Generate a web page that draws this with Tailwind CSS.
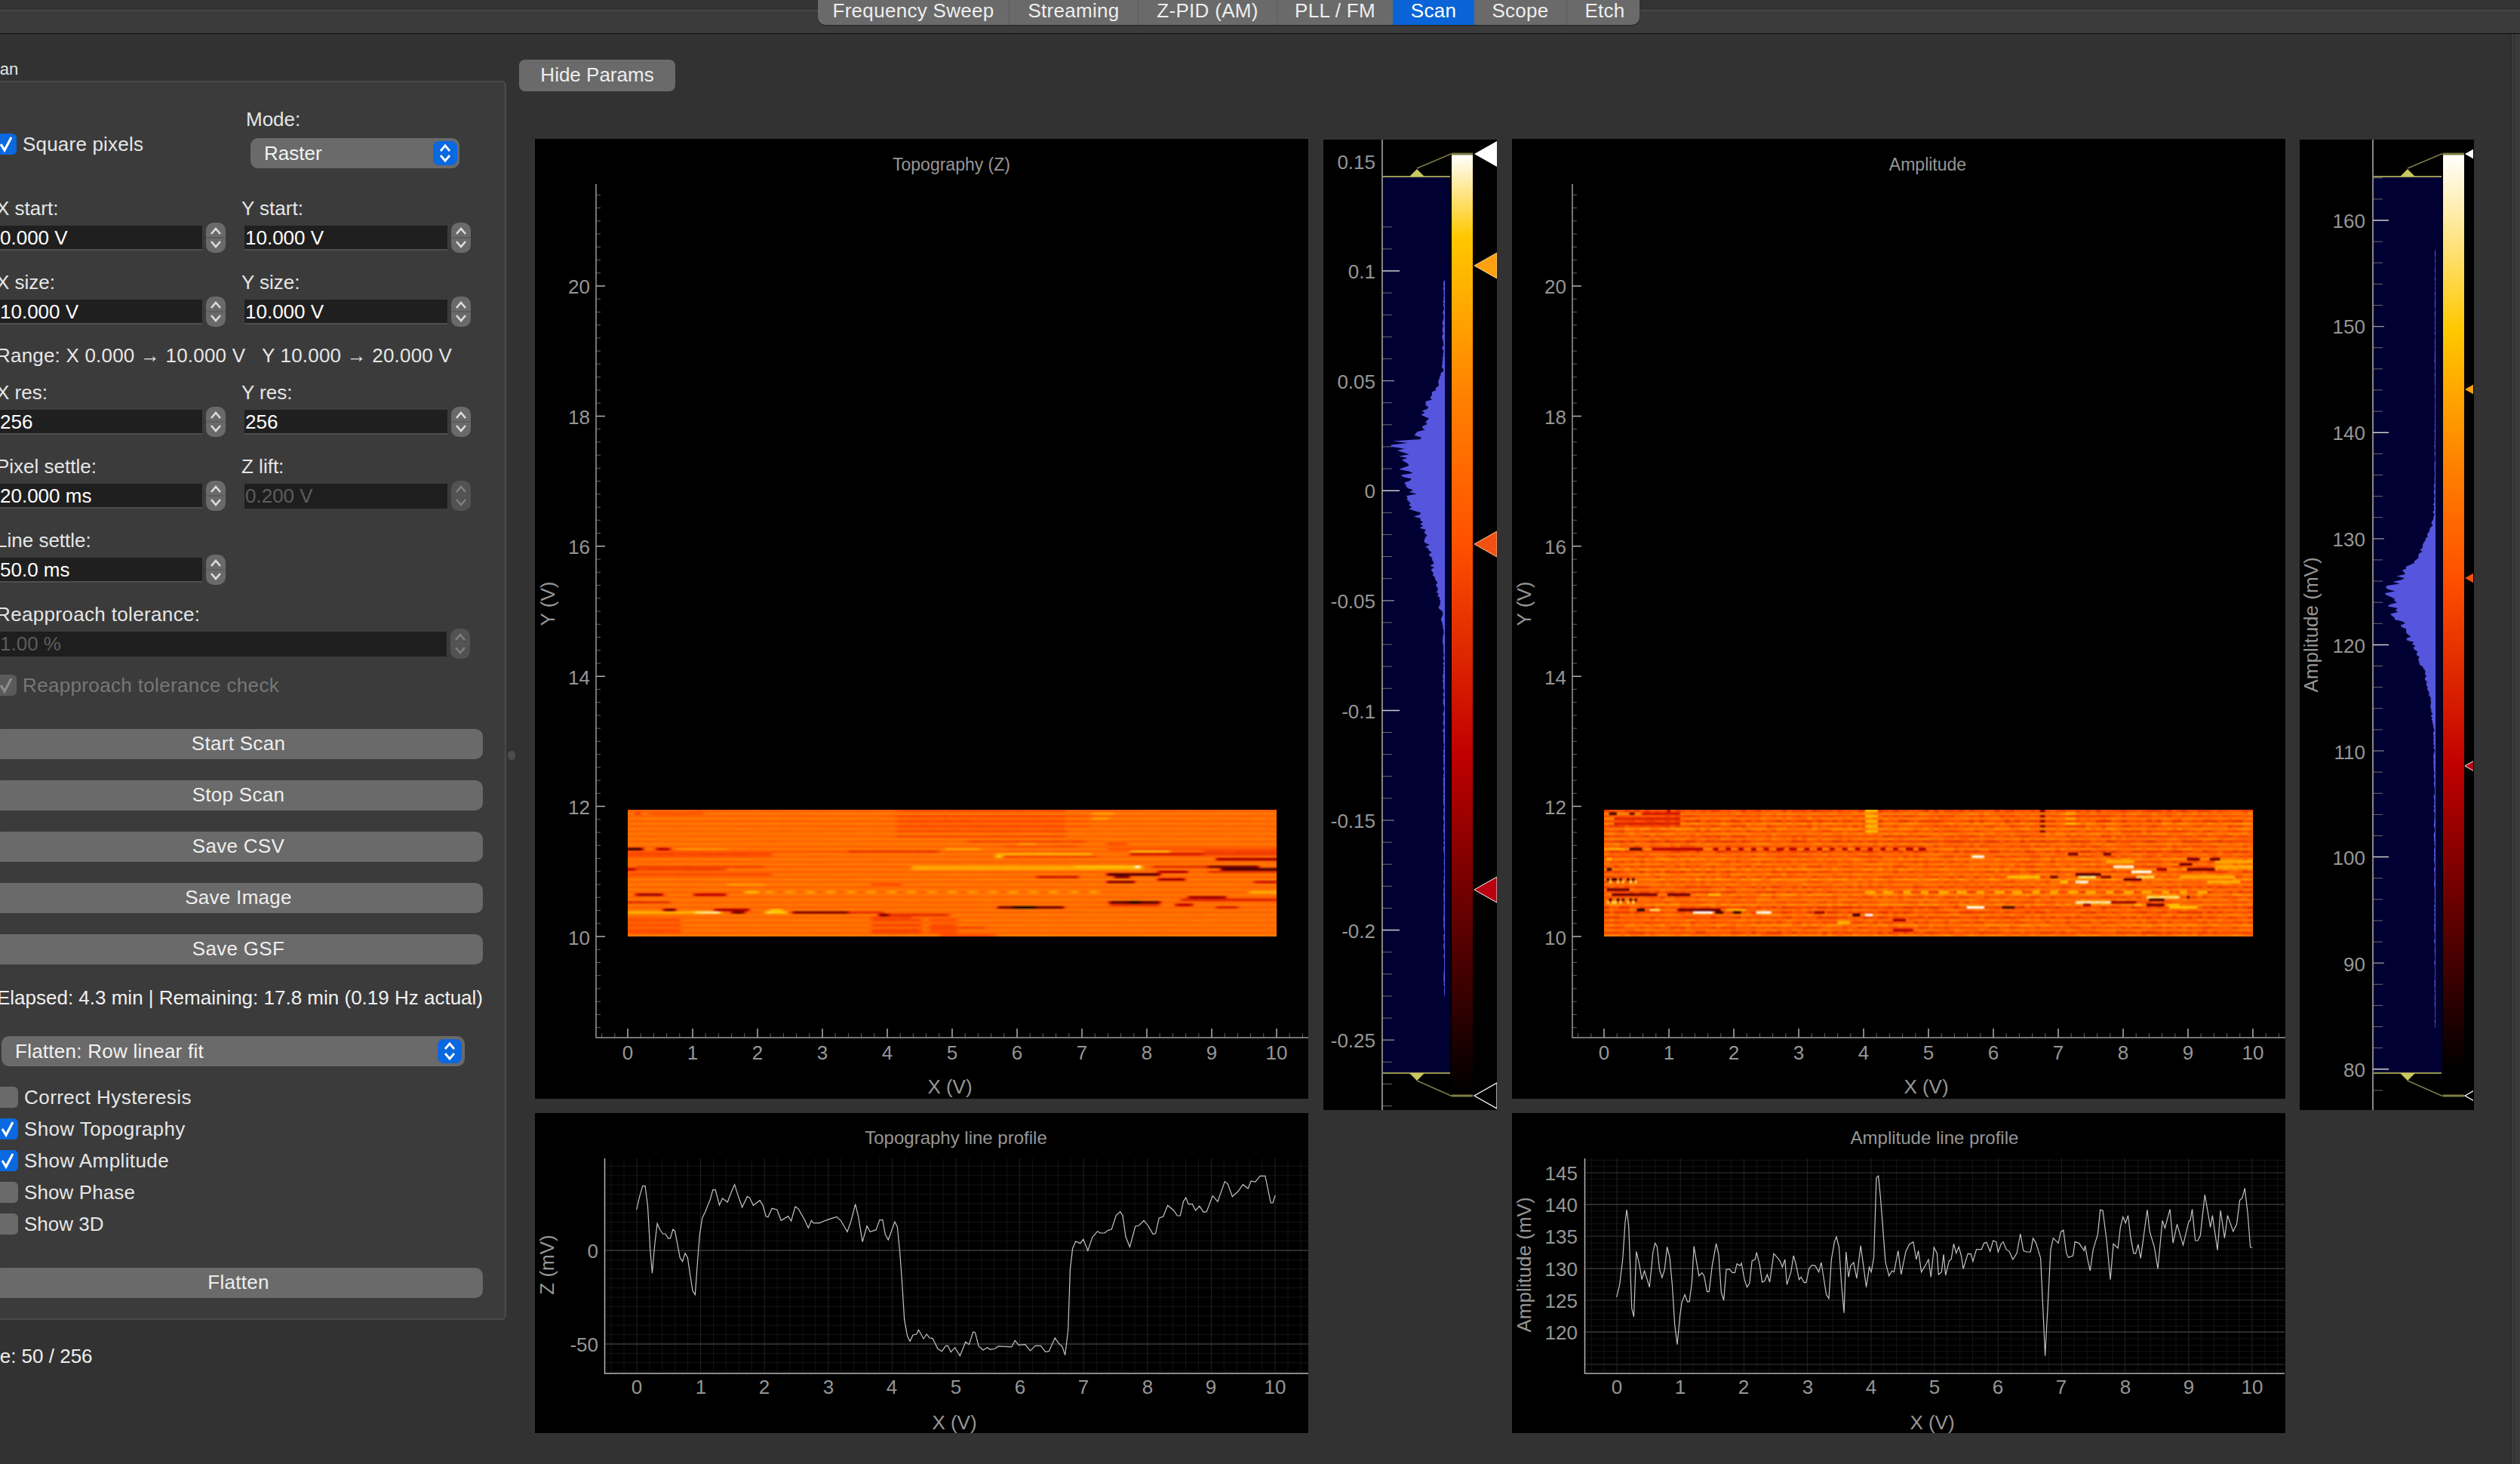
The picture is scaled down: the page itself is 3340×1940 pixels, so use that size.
<!DOCTYPE html>
<html>
<head>
<meta charset="utf-8">
<script src="https://cdn.jsdelivr.net/npm/@tailwindcss/browser@4"></script>
</head>
<body class="m-0 bg-[#323232]">
<svg class="hidden">
  <symbol id="spin" viewBox="0 0 26 40"><line x1="0" y1="20" x2="26" y2="20" stroke="#585858" stroke-width="1.5"/><polyline points="7,15 13,8 19,15" fill="none" stroke="currentColor" stroke-width="2.6"/><polyline points="7,25 13,32 19,25" fill="none" stroke="currentColor" stroke-width="2.6"/></symbol>
  <symbol id="updown" viewBox="0 0 32 32"><polyline points="10,13 16,6 22,13" fill="none" stroke="white" stroke-width="2.8"/><polyline points="10,19 16,26 22,19" fill="none" stroke="white" stroke-width="2.8"/></symbol>
  <symbol id="check" viewBox="0 0 28 28"><polyline points="7,14 12,22 21,5" fill="none" stroke="currentColor" stroke-width="3.2"/></symbol>
</svg>
<div class="relative w-[3340px] h-[1940px] overflow-hidden bg-[#323232] font-['Liberation_Sans',Arial,sans-serif] text-[26px] text-[#e6e6e6]">

  <header class="relative h-[45px]">
    <div class="h-[13px] bg-[#333333]"></div>
    <div class="h-[2px] bg-[#484848]"></div>
    <div class="h-[29px] bg-[#3b3b3b]"></div>
    <div class="h-[1px] bg-[#0e0e0e]"></div>
    <nav class="absolute top-0 left-[1084px] h-[33px] w-[1089px] flex rounded-b-[10px] overflow-hidden bg-[#6a6a6a] leading-[29px] text-center text-[#eeeeee] tracking-[0.3px] shadow-[0_1px_1px_#222]">
      <div class="w-[254px] border-r border-[#5a5a5a]">Frequency Sweep</div>
      <div class="w-[171px] border-r border-[#5a5a5a]">Streaming</div>
      <div class="w-[184px] border-r border-[#5a5a5a]">Z-PID (AM)</div>
      <div class="w-[153px]">PLL / FM</div>
      <div class="w-[108px] bg-[#0a64d8] text-white">Scan</div>
      <div class="w-[123px] border-r border-[#5a5a5a]">Scope</div>
      <div class="w-[96px] pl-[4px]">Etch</div>
    </nav>
  </header>

  <div class="flex h-[1895px]">
    <aside class="relative w-[688px] shrink-0 pt-[33px]">
      <div class="-ml-[30px] w-[701px]">
        <div class="h-[29px] leading-[28px] text-[22px] pl-[4px]">Scan</div>
        <section class="w-[701px] border-2 border-[#4a4a4a] rounded-[6px] bg-[#3b3b3b] pl-[23px] pt-[33px] pb-[27px]">
          <div class="grid grid-cols-[325px_325px] h-[118px]">
            <div class="pt-[35px] flex items-start gap-[8px] -ml-[1px]">
              <span class="w-[28px] h-[28px] rounded-[6px] bg-[#0a68e0] text-white block"><svg class="w-[28px] h-[28px]"><use href="#check"/></svg></span>
              <span class="leading-[28px] tracking-[0.2px]">Square pixels</span>
            </div>
            <div>
              <div class="h-[32px] leading-[32px] ml-[6px]">Mode:</div>
              <div class="mt-[9px] ml-[12px] w-[277px] h-[40px] rounded-[10px] bg-[#6a6a6a] flex items-center justify-between pl-[18px] pr-[3px] text-[#f2f2f2]">
                <span>Raster</span>
                <span class="w-[32px] h-[32px] rounded-[8px] bg-[#0a68e0] block"><svg class="w-[32px] h-[32px]"><use href="#updown"/></svg></span>
              </div>
            </div>
          </div>

          <div class="grid grid-cols-[325px_325px]">
            <div class="h-[98px]"><div class="h-[32px] leading-[32px]">X start:</div><div class="flex items-center mt-[3px] ml-[4px]"><div class="w-[269px] h-[33px] bg-[#1f1f1f] border-b-2 border-[#4e4e4e] pl-[1px] leading-[32px] text-white">0.000 V</div><svg class="ml-[5px] w-[26px] h-[40px] rounded-[10px] bg-[#6a6a6a] text-[#dddddd]"><use href="#spin"/></svg></div></div>
            <div class="h-[98px]"><div class="h-[32px] leading-[32px]">Y start:</div><div class="flex items-center mt-[3px] ml-[4px]"><div class="w-[269px] h-[33px] bg-[#1f1f1f] border-b-2 border-[#4e4e4e] pl-[1px] leading-[32px] text-white">10.000 V</div><svg class="ml-[5px] w-[26px] h-[40px] rounded-[10px] bg-[#6a6a6a] text-[#dddddd]"><use href="#spin"/></svg></div></div>
            <div class="h-[98px]"><div class="h-[32px] leading-[32px]">X size:</div><div class="flex items-center mt-[3px] ml-[4px]"><div class="w-[269px] h-[33px] bg-[#1f1f1f] border-b-2 border-[#4e4e4e] pl-[1px] leading-[32px] text-white">10.000 V</div><svg class="ml-[5px] w-[26px] h-[40px] rounded-[10px] bg-[#6a6a6a] text-[#dddddd]"><use href="#spin"/></svg></div></div>
            <div class="h-[98px]"><div class="h-[32px] leading-[32px]">Y size:</div><div class="flex items-center mt-[3px] ml-[4px]"><div class="w-[269px] h-[33px] bg-[#1f1f1f] border-b-2 border-[#4e4e4e] pl-[1px] leading-[32px] text-white">10.000 V</div><svg class="ml-[5px] w-[26px] h-[40px] rounded-[10px] bg-[#6a6a6a] text-[#dddddd]"><use href="#spin"/></svg></div></div>
          </div>

          <div class="h-[48px] leading-[30px] whitespace-pre tracking-[0.2px]">Range: X 0.000 → 10.000 V   Y 10.000 → 20.000 V</div>

          <div class="grid grid-cols-[325px_325px]">
            <div class="h-[98px]"><div class="h-[32px] leading-[32px]">X res:</div><div class="flex items-center mt-[3px] ml-[4px]"><div class="w-[269px] h-[33px] bg-[#1f1f1f] border-b-2 border-[#4e4e4e] pl-[1px] leading-[32px] text-white">256</div><svg class="ml-[5px] w-[26px] h-[40px] rounded-[10px] bg-[#6a6a6a] text-[#dddddd]"><use href="#spin"/></svg></div></div>
            <div class="h-[98px]"><div class="h-[32px] leading-[32px]">Y res:</div><div class="flex items-center mt-[3px] ml-[4px]"><div class="w-[269px] h-[33px] bg-[#1f1f1f] border-b-2 border-[#4e4e4e] pl-[1px] leading-[32px] text-white">256</div><svg class="ml-[5px] w-[26px] h-[40px] rounded-[10px] bg-[#6a6a6a] text-[#dddddd]"><use href="#spin"/></svg></div></div>
            <div class="h-[98px]"><div class="h-[32px] leading-[32px]">Pixel settle:</div><div class="flex items-center mt-[3px] ml-[4px]"><div class="w-[269px] h-[33px] bg-[#1f1f1f] border-b-2 border-[#4e4e4e] pl-[1px] leading-[32px] text-white">20.000 ms</div><svg class="ml-[5px] w-[26px] h-[40px] rounded-[10px] bg-[#6a6a6a] text-[#dddddd]"><use href="#spin"/></svg></div></div>
            <div class="h-[98px]"><div class="h-[32px] leading-[32px]">Z lift:</div><div class="flex items-center mt-[3px] ml-[4px]"><div class="w-[269px] h-[33px] bg-[#1e1e1e] pl-[1px] leading-[32px] text-[#5c5c5c]">0.200 V</div><svg class="ml-[5px] w-[26px] h-[40px] rounded-[10px] bg-[#525252] text-[#7e7e7e]"><use href="#spin"/></svg></div></div>
            <div class="h-[98px]"><div class="h-[32px] leading-[32px]">Line settle:</div><div class="flex items-center mt-[3px] ml-[4px]"><div class="w-[269px] h-[33px] bg-[#1f1f1f] border-b-2 border-[#4e4e4e] pl-[1px] leading-[32px] text-white">50.0 ms</div><svg class="ml-[5px] w-[26px] h-[40px] rounded-[10px] bg-[#6a6a6a] text-[#dddddd]"><use href="#spin"/></svg></div></div>
          </div>

          <div class="h-[98px]"><div class="h-[32px] leading-[32px] tracking-[0.35px]">Reapproach tolerance:</div><div class="flex items-center mt-[3px] ml-[4px]"><div class="w-[593px] h-[33px] bg-[#1e1e1e] pl-[1px] leading-[32px] text-[#5c5c5c]">1.00 %</div><svg class="ml-[5px] w-[26px] h-[40px] rounded-[10px] bg-[#525252] text-[#7e7e7e]"><use href="#spin"/></svg></div></div>

          <div class="-mt-[2px] h-[28px] flex items-center gap-[8px] -ml-[1px] text-[#777777]">
            <span class="w-[28px] h-[28px] rounded-[6px] bg-[#5a5a5a] text-[#8c8c8c] block"><svg class="w-[28px] h-[28px]"><use href="#check"/></svg></span>
            <span class="tracking-[0.35px]">Reapproach tolerance check</span>
          </div>

          <div class="mt-[44px] -ml-[3px] w-[648px] flex flex-col gap-[28px] text-center text-[#eeeeee] leading-[38px] tracking-[0.3px]">
            <div class="h-[40px] rounded-[10px] bg-[#6a6a6a]">Start Scan</div>
            <div class="h-[40px] rounded-[10px] bg-[#6a6a6a]">Stop Scan</div>
            <div class="h-[40px] rounded-[10px] bg-[#6a6a6a]">Save CSV</div>
            <div class="h-[40px] rounded-[10px] bg-[#6a6a6a]">Save Image</div>
            <div class="h-[40px] rounded-[10px] bg-[#6a6a6a]">Save GSF</div>
          </div>

          <div class="mt-[28px] -ml-[3px] w-[648px] h-[32px] leading-[32px] flex justify-end whitespace-nowrap text-[#f0f0f0]">Elapsed: 4.3 min | Remaining: 17.8 min (0.19 Hz actual)</div>

          <div class="mt-[35px] ml-[7px] w-[614px] h-[40px] rounded-[10px] bg-[#6a6a6a] flex items-center justify-between pl-[18px] pr-[4px] text-[#f2f2f2]">
            <span class="tracking-[0.25px]">Flatten: Row linear fit</span>
            <span class="w-[32px] h-[32px] rounded-[8px] bg-[#0a68e0] block"><svg class="w-[32px] h-[32px]"><use href="#updown"/></svg></span>
          </div>

          <div class="mt-[27px] ml-[1px] flex flex-col gap-[14px]">
            <div class="h-[28px] flex items-center gap-[8px]"><span class="w-[28px] h-[28px] rounded-[6px] bg-[#6a6a6a] block"></span><span class="tracking-[0.45px]">Correct Hysteresis</span></div>
            <div class="h-[28px] flex items-center gap-[8px]"><span class="w-[28px] h-[28px] rounded-[6px] bg-[#0a68e0] text-white block"><svg class="w-[28px] h-[28px]"><use href="#check"/></svg></span><span class="tracking-[0.4px]">Show Topography</span></div>
            <div class="h-[28px] flex items-center gap-[8px]"><span class="w-[28px] h-[28px] rounded-[6px] bg-[#0a68e0] text-white block"><svg class="w-[28px] h-[28px]"><use href="#check"/></svg></span><span class="tracking-[0.4px]">Show Amplitude</span></div>
            <div class="h-[28px] flex items-center gap-[8px]"><span class="w-[28px] h-[28px] rounded-[6px] bg-[#6a6a6a] block"></span><span class="tracking-[0.1px]">Show Phase</span></div>
            <div class="h-[28px] flex items-center gap-[8px]"><span class="w-[28px] h-[28px] rounded-[6px] bg-[#6a6a6a] block"></span><span>Show 3D</span></div>
          </div>

          <div class="mt-[44px] -ml-[3px] w-[648px] h-[40px] rounded-[10px] bg-[#6a6a6a] text-center text-[#eeeeee] leading-[38px] tracking-[0.3px]">Flatten</div>
        </section>
        <div class="mt-[32px] h-[32px] leading-[32px] -ml-[5px] text-[#f0f0f0]">Line: 50 / 256</div>
      </div>
      <div class="absolute top-[950px] right-[5px] w-[10px] h-[12px] rounded-full bg-[#4c4c4c]"></div>
    </aside>

    <main class="w-[2639px] shrink-0 pt-[34px]">
      <div class="w-[207px] h-[42px] rounded-[8px] bg-[#6a6a6a] text-center leading-[40px] text-[#eeeeee]">Hide Params</div>
      <div class="mt-[63px] ml-[21px] grid grid-cols-[1025px_230px_1025px_230px] gap-x-[20px] grid-rows-[1291px_424px] items-start">

        <div class="relative h-[1272px] bg-black">
          <svg viewBox="709 185 1025 1272" class="block w-[1025px] h-[1272px] fill-[#969696]">
            <path id="ia-min" stroke="#5e5e5e" stroke-width="1" fill="none"/><path id="ia-maj" stroke="#b0b0b0" stroke-width="1.5" fill="none"/>
            <path d="M790 245V1376H1734" stroke="#9a9a9a" stroke-width="1.5" fill="none"/>
            <text x="1261" y="227" text-anchor="middle" class="text-[23px]">Topography (Z)</text>
            <g text-anchor="end" class="text-[26px]"><text x="782" y="390">20</text><text x="782" y="563">18</text><text x="782" y="735">16</text><text x="782" y="908">14</text><text x="782" y="1080">12</text><text x="782" y="1253">10</text></g>
            <g text-anchor="middle" class="text-[26px]"><text x="832" y="1405">0</text><text x="918" y="1405">1</text><text x="1004" y="1405">2</text><text x="1090" y="1405">3</text><text x="1176" y="1405">4</text><text x="1262" y="1405">5</text><text x="1348" y="1405">6</text><text x="1434" y="1405">7</text><text x="1520" y="1405">8</text><text x="1606" y="1405">9</text><text x="1692" y="1405">10</text><text x="1259" y="1450">X (V)</text><text transform="translate(735 801) rotate(-90)">Y (V)</text></g>
          </svg>
          <canvas id="heat1" width="256" height="50" class="absolute left-[123px] top-[889px] w-[860px] h-[168px]"></canvas>
        </div>

        <div class="h-[1286px] bg-black mt-[1px]">
          <svg viewBox="1754 186 230 1286" class="block w-[230px] h-[1286px] fill-[#969696]">
            <defs><linearGradient id="g1" gradientUnits="userSpaceOnUse" x1="0" y1="206" x2="0" y2="1447"><stop offset="0" stop-color="#fff"/><stop offset=".087" stop-color="#ffc800"/><stop offset=".259" stop-color="#ff8000"/><stop offset=".416" stop-color="#ff5000"/><stop offset=".64" stop-color="#c00000"/><stop offset="1" stop-color="#000"/></linearGradient></defs>
            <rect x="1833" y="235" width="89" height="1188" fill="#000033"/>
            <path id="hist1" fill="#5555dd"/>
            <path id="c1-min" stroke="#6a6a6a" stroke-width="1" fill="none"/><path id="c1-maj" stroke="#9a9a9a" stroke-width="1.2" fill="none"/><path id="c1-lng" stroke="#d0d0d0" stroke-width="1.5" fill="none"/>
            <line x1="1832" y1="186" x2="1832" y2="1472" stroke="#b0b0b0" stroke-width="1.5"/>
            <rect x="1924" y="206" width="28" height="1241" fill="url(#g1)"/>
            <g fill="none" stroke="#c8c860" stroke-width="1.5"><path d="M1833 235H1922M1833 1423H1922"/></g>
            <g fill="none" stroke="#7e7e48" stroke-width="1.5"><path d="M1878 224L1923 205H1924M1878 1433L1923 1453H1924"/></g>
            <path d="M1924 205H1952M1924 1453H1952" stroke="#7e7e48" stroke-width="3" fill="none"/>
            <path d="M1868 235H1888L1878 225ZM1868 1423H1888L1878 1433Z" fill="#c8c860"/>
            <path d="M1954 205L1984 188V222Z" fill="#fff"/>
            <path d="M1954 353L1984 336V370Z" fill="#ffa010" stroke="#ffd890" stroke-width="1"/>
            <path d="M1954 722L1984 705V739Z" fill="#f25010" stroke="#ffc0a0" stroke-width="1"/>
            <path d="M1954 1180L1984 1163V1197Z" fill="#b80010" stroke="#fff" stroke-width="1"/>
            <path d="M1954 1453L1984 1436V1470Z" fill="#000" stroke="#fff" stroke-width="1.3"/>
            <g text-anchor="end" class="text-[26px]"><text x="1823" y="225">0.15</text><text x="1823" y="370">0.1</text><text x="1823" y="516">0.05</text><text x="1823" y="661">0</text><text x="1823" y="807">-0.05</text><text x="1823" y="953">-0.1</text><text x="1823" y="1098">-0.15</text><text x="1823" y="1244">-0.2</text><text x="1823" y="1389">-0.25</text></g>
          </svg>
        </div>

        <div class="relative h-[1272px] bg-black">
          <svg viewBox="2004 185 1025 1272" class="block w-[1025px] h-[1272px] fill-[#969696]">
            <path id="ib-min" stroke="#5e5e5e" stroke-width="1" fill="none"/><path id="ib-maj" stroke="#b0b0b0" stroke-width="1.5" fill="none"/>
            <path d="M2084 245V1376H3029" stroke="#9a9a9a" stroke-width="1.5" fill="none"/>
            <text x="2555" y="227" text-anchor="middle" class="text-[23px]">Amplitude</text>
            <g text-anchor="end" class="text-[26px]"><text x="2076" y="390">20</text><text x="2076" y="563">18</text><text x="2076" y="735">16</text><text x="2076" y="908">14</text><text x="2076" y="1080">12</text><text x="2076" y="1253">10</text></g>
            <g text-anchor="middle" class="text-[26px]"><text x="2126" y="1405">0</text><text x="2212" y="1405">1</text><text x="2298" y="1405">2</text><text x="2384" y="1405">3</text><text x="2470" y="1405">4</text><text x="2556" y="1405">5</text><text x="2642" y="1405">6</text><text x="2728" y="1405">7</text><text x="2814" y="1405">8</text><text x="2900" y="1405">9</text><text x="2986" y="1405">10</text><text x="2553" y="1450">X (V)</text><text transform="translate(2029 801) rotate(-90)">Y (V)</text></g>
          </svg>
          <canvas id="heat2" width="256" height="50" class="absolute left-[122px] top-[889px] w-[860px] h-[168px]"></canvas>
        </div>

        <div class="h-[1286px] bg-black mt-[1px] -ml-[1px]">
          <svg viewBox="3048 186 230 1286" class="block w-[230px] h-[1286px] fill-[#969696]">
            <defs><linearGradient id="g2" gradientUnits="userSpaceOnUse" x1="0" y1="206" x2="0" y2="1420"><stop offset="0" stop-color="#fff"/><stop offset=".191" stop-color="#ffc800"/><stop offset=".341" stop-color="#ff8000"/><stop offset=".462" stop-color="#ff5000"/><stop offset=".667" stop-color="#c00000"/><stop offset="1" stop-color="#000"/></linearGradient></defs>
            <rect x="3146" y="235" width="91" height="1188" fill="#000033"/>
            <path id="hist2" fill="#5555dd"/>
            <path id="c2-min" stroke="#6a6a6a" stroke-width="1" fill="none"/><path id="c2-maj" stroke="#9a9a9a" stroke-width="1.2" fill="none"/><path id="c2-lng" stroke="#d0d0d0" stroke-width="1.5" fill="none"/>
            <line x1="3145" y1="186" x2="3145" y2="1472" stroke="#b0b0b0" stroke-width="1.5"/>
            <rect x="3238" y="206" width="28" height="1241" fill="url(#g2)"/>
            <path d="M3146 235H3236M3146 1423H3236" fill="none" stroke="#c8c860" stroke-width="1.5"/>
            <path d="M3191 224L3236 205H3238M3191 1433L3236 1453H3238" fill="none" stroke="#7e7e48" stroke-width="1.5"/>
            <path d="M3238 205H3266M3238 1453H3266" stroke="#7e7e48" stroke-width="3" fill="none"/>
            <path d="M3181 235H3201L3191 225ZM3181 1423H3201L3191 1433Z" fill="#c8c860"/>
            <path d="M3267 205L3297 188V222Z" fill="#fff"/>
            <path d="M3267 517L3297 500V534Z" fill="#ffa010"/>
            <path d="M3267 767L3297 750V784Z" fill="#f25010"/>
            <path d="M3267 1016L3297 999V1033Z" fill="#b80010" stroke="#fff" stroke-width="1"/>
            <path d="M3267 1453L3297 1436V1470Z" fill="#000" stroke="#fff" stroke-width="1.3"/>
            <g text-anchor="end" class="text-[26px]"><text x="3135" y="303">160</text><text x="3135" y="443">150</text><text x="3135" y="584">140</text><text x="3135" y="725">130</text><text x="3135" y="866">120</text><text x="3135" y="1007">110</text><text x="3135" y="1147">100</text><text x="3135" y="1288">90</text><text x="3135" y="1428">80</text></g>
            <text transform="translate(3072 829) rotate(-90)" text-anchor="middle" class="text-[26px]">Amplitude (mV)</text>
          </svg>
        </div>

        <div class="h-[424px] bg-black">
          <svg viewBox="710 1476 1025 424" class="block w-[1025px] h-[424px] fill-[#969696]">
            <path id="l1-min" stroke="#141414" stroke-width="1" fill="none"/><path id="l1-maj" stroke="#222222" stroke-width="1" fill="none"/>
            <path d="M802 1658H1735M802 1782H1735" stroke="#4c4c4c" stroke-width="1.2" fill="none"/>
            <path d="M802.5 1536V1821H1735" stroke="#b4b4b4" stroke-width="1.5" fill="none"/>
            <g transform="translate(700 1470) scale(.6698 .3333)"><polyline vector-effect="non-scaling-stroke" fill="none" stroke="#c4c4c4" stroke-width="1.2" points="216,402 222,350 228,308 233,308 238,385 243,560 247,655 252,540 257,457 262,480 268,498 273,498 279,517 283,515 288,480 292,487 297,540 302,593 307,608 312,575 317,592 322,660 327,725 332,740 337,600 341,500 346,435 352,410 358,380 362,360 367,323 372,323 380,384 386,357 396,372 404,330 410,302 416,340 425,393 435,350 440,355 447,385 460,365 466,385 472,428 476,432 484,397 494,402 502,445 516,428 522,447 530,390 536,398 548,440 556,475 562,445 566,455 578,455 590,445 597,440 612,430 620,445 633,490 640,450 649,380 655,430 663,530 672,467 678,490 690,482 697,443 703,443 708,500 714,522 720,490 727,450 732,470 737,570 741,680 746,840 752,905 757,925 763,900 770,897 774,880 784,915 790,897 796,912 802,914 812,955 820,965 828,943 832,943 838,968 846,950 856,983 867,928 874,938 882,888 886,890 893,945 902,960 910,950 916,958 925,955 932,945 958,948 965,922 972,940 985,938 995,963 1005,943 1016,943 1025,967 1032,965 1044,912 1052,935 1058,945 1064,980 1070,880 1074,640 1079,555 1085,528 1094,536 1100,520 1109,565 1118,512 1128,488 1134,495 1142,495 1149,484 1156,480 1165,425 1173,410 1178,425 1184,510 1192,550 1203,468 1210,465 1220,445 1228,465 1238,500 1243,497 1250,435 1258,430 1267,385 1279,405 1286,426 1292,426 1298,370 1303,354 1308,380 1316,380 1322,405 1330,388 1338,412 1344,410 1356,347 1366,370 1380,290 1386,300 1395,350 1406,330 1416,302 1426,318 1432,288 1440,292 1450,268 1460,268 1471,375 1475,375 1480,345"/></g>
            <text x="1268" y="1517" text-anchor="middle" class="text-[24px]">Topography line profile</text>
            <g text-anchor="end" class="text-[26px]"><text x="794" y="1668">0</text><text x="794" y="1792">-50</text></g>
            <g text-anchor="middle" class="text-[26px]"><text x="845" y="1848">0</text><text x="930" y="1848">1</text><text x="1014" y="1848">2</text><text x="1099" y="1848">3</text><text x="1183" y="1848">4</text><text x="1268" y="1848">5</text><text x="1353" y="1848">6</text><text x="1437" y="1848">7</text><text x="1522" y="1848">8</text><text x="1606" y="1848">9</text><text x="1691" y="1848">10</text><text x="1266" y="1895">X (V)</text><text transform="translate(735 1677) rotate(-90)">Z (mV)</text></g>
          </svg>
        </div>
        <div></div>
        <div class="h-[424px] bg-black">
          <svg viewBox="2004 1476 1025 424" class="block w-[1025px] h-[424px] fill-[#969696]">
            <path id="l2-min" stroke="#141414" stroke-width="1" fill="none"/><path id="l2-maj" stroke="#222222" stroke-width="1" fill="none"/>
            <path d="M2100 1597H3028M2100 1682H3028M2100 1766H3028" stroke="#4c4c4c" stroke-width="1.2" fill="none"/>
            <path d="M2100 1555H3028M2100 1639H3028M2100 1724H3028M2100 1809H3028" stroke="#2e2e2e" stroke-width="1" fill="none"/>
            <path d="M2100.5 1536V1821H3028" stroke="#b4b4b4" stroke-width="1.5" fill="none"/>
            <g transform="translate(2000 1470) scale(.6698 .3333)"><polyline vector-effect="non-scaling-stroke" fill="none" stroke="#c4c4c4" stroke-width="1.2" points="213,750 219,700 225,600 230,450 233,402 237,470 243,795 247,828 252,568 258,620 263,680 268,645 272,670 278,710 285,570 289,535 293,548 298,640 303,672 308,640 313,550 318,590 323,700 328,860 333,938 338,830 342,770 348,740 353,768 357,768 362,690 366,548 372,620 376,665 382,653 386,665 392,728 396,728 402,625 410,537 415,580 420,730 425,762 430,640 436,638 442,652 447,652 451,617 457,625 460,615 466,680 471,710 476,695 481,605 487,600 490,572 496,620 501,690 506,685 511,660 516,690 524,577 530,590 536,605 541,630 546,600 550,700 558,650 563,585 568,620 574,680 578,670 584,692 588,692 594,635 600,622 606,625 613,650 618,612 624,690 628,740 633,755 638,600 644,530 648,510 653,550 658,700 663,812 667,570 672,670 676,625 682,612 688,675 696,545 707,710 713,630 717,650 722,590 727,275 731,268 735,350 745,610 752,665 758,645 762,650 770,565 776,660 785,570 792,540 800,530 806,600 810,565 816,650 825,620 830,600 835,670 841,552 847,575 850,660 856,650 860,580 864,663 871,605 875,600 880,538 885,575 890,550 895,585 899,637 908,577 914,578 918,608 925,560 935,560 940,535 945,532 952,568 958,525 964,530 968,570 974,537 978,530 984,560 990,568 997,600 1005,575 1012,498 1018,565 1024,570 1032,570 1037,516 1043,535 1052,595 1061,983 1072,560 1077,515 1087,535 1092,490 1097,483 1103,575 1107,592 1116,585 1120,530 1128,535 1138,565 1140,545 1145,600 1150,645 1156,560 1165,500 1170,403 1175,405 1183,530 1190,680 1196,538 1205,555 1210,470 1215,430 1220,455 1225,425 1230,510 1236,575 1240,577 1245,540 1250,595 1263,402 1268,490 1277,550 1284,637 1293,445 1298,475 1308,400 1314,535 1322,460 1334,543 1345,450 1348,445 1352,400 1358,525 1363,525 1368,505 1377,342 1388,472 1392,425 1402,563 1408,405 1416,515 1422,425 1433,488 1440,460 1446,365 1451,355 1456,317 1462,420 1467,552 1471,552"/></g>
            <text x="2564" y="1517" text-anchor="middle" class="text-[24px]">Amplitude line profile</text>
            <g text-anchor="end" class="text-[26px]"><text x="2091" y="1565">145</text><text x="2091" y="1607">140</text><text x="2091" y="1649">135</text><text x="2091" y="1692">130</text><text x="2091" y="1734">125</text><text x="2091" y="1776">120</text></g>
            <g text-anchor="middle" class="text-[26px]"><text x="2143" y="1848">0</text><text x="2227" y="1848">1</text><text x="2311" y="1848">2</text><text x="2396" y="1848">3</text><text x="2480" y="1848">4</text><text x="2564" y="1848">5</text><text x="2648" y="1848">6</text><text x="2732" y="1848">7</text><text x="2817" y="1848">8</text><text x="2901" y="1848">9</text><text x="2985" y="1848">10</text><text x="2561" y="1895">X (V)</text><text transform="translate(2029 1677) rotate(-90)">Amplitude (mV)</text></g>
          </svg>
        </div>
        <div></div>
      </div>
    </main>

    <div class="w-[13px] shrink-0 bg-[#3b3b3b] border-l-2 border-[#2c2c2c]"><div class="w-[4px] h-full border-r border-[#2c2c2c]"></div></div>
  </div>
</div>

<script>
(function(){
  var seed=12345;
  function R(){seed=(seed*1664525+1013904223)>>>0;return seed/4294967296;}
  var stops=[[0,[0,0,0]],[.36,[192,0,0]],[.584,[255,80,0]],[.74,[255,128,0]],[.913,[255,200,0]],[1,[255,255,255]]];
  function cmap(t){t=Math.max(0,Math.min(1,t));for(var i=1;i<stops.length;i++){if(t<=stops[i][0]){var a=stops[i-1],b=stops[i],f=(t-a[0])/(b[0]-a[0]);return [0,1,2].map(function(k){return a[1][k]+(b[1][k]-a[1][k])*f;});}}return [255,255,255];}
  function heat(id,x0,x1,e,o,noise,seg,feats,blur){
    var c=document.getElementById(id),g=c.getContext('2d'),im=g.createImageData(256,50),v=[];
    for(var r=0;r<50;r++){v[r]=[];var ro=(R()-.5)*noise*.6,last=0;for(var i=0;i<256;i++){if(i%seg==0)last=(R()-.5)*noise;v[r][i]=(r%2?o:e)+ro+last;}}
    feats.forEach(function(f){var a=Math.max(0,Math.round((f[0]-x0)/(x1-x0)*256)),b=Math.min(256,Math.round((f[1]-x0)/(x1-x0)*256)),r=Math.min(49,Math.max(0,Math.floor((f[2]-102)/10.06)));for(var i=a;i<Math.max(b,a+1);i++){v[r][i]=f[3]+(R()-.5)*.03;}});
    if(blur){for(var r=0;r<50;r++){var s=v[r].slice();for(var i=1;i<255;i++){v[r][i]=(s[i-1]+s[i]*2+s[i+1])/4;}}}
    for(var r=0;r<50;r++)for(var i=0;i<256;i++){var p=cmap(v[r][i]),k=(r*256+i)*4;im.data[k]=p[0];im.data[k+1]=p[1];im.data[k+2]=p[2];im.data[k+3]=255;}
    g.putImageData(im,0,0);
  }
  var f1=[];
  [112,127,147,167,187,207].forEach(function(y){f1.push([665,1035,y,.57]);});
  [137,157,177].forEach(function(y){f1.push([665,1035,y,.66]);});
  [127,147,167].forEach(function(y){f1.push([1040,1085,y,.6]);});
  f1.push([1090,1140,117,.82],[1090,1130,137,.82],[100,110,117,.5],[130,250,117,.6],[820,1080,227,.56],[900,1060,247,.58],[930,970,237,.8],[1125,1165,237,.58]);
  f1.push([85,120,258,.12],[145,180,258,.35],[190,300,258,.78],[770,850,258,.82],[1120,1490,258,.6]);
  f1.push([85,560,268,.6],[560,760,268,.52],[1170,1260,268,.85],[1330,1490,268,.54]);
  f1.push([85,400,278,.56],[880,1090,278,.86],[1170,1330,278,.42],[1330,1490,278,.53]);
  f1.push([85,400,288,.6],[880,900,288,.9],[900,1100,288,.56],[1360,1490,298,.3]);
  f1.push([100,380,328,.55],[700,1050,328,.83],[1050,1180,328,.9],[1180,1200,328,1],[1220,1340,328,.5],[1340,1450,328,.22],[85,110,338,.35],[100,300,338,.55],[700,1200,338,.82],[1370,1490,338,.13],[1230,1300,348,.35],[1340,1490,348,.5]);
  f1.push([1120,1240,358,.16],[85,400,358,.58],[970,1060,368,.42],[1140,1170,368,.22],[1230,1290,378,.3],[1120,1180,390,.25],[1440,1490,390,.4],[300,380,400,.8],[610,680,400,.58]);
  f1.push([100,160,438,.3],[230,300,438,.35],[340,370,430,.87],[1430,1490,430,.85]);
  for(var x=380;x<1120;x+=44)f1.push([x,x+22,430,.8]);
  f1.push([1300,1380,450,.3],[1280,1490,460,.47],[1130,1240,468,.16],[1170,1195,468,.02],[85,180,468,.5],[1270,1310,480,.35],[885,1030,490,.22],[920,970,490,.04],[1360,1410,490,.45],[1130,1240,478,.5]);
  f1.push([160,190,500,.22],[270,350,500,.32],[390,420,500,.9],[85,230,510,.86],[230,290,510,.96],[310,340,510,.2],[380,430,510,.92],[440,560,510,.25],[560,640,510,.5],[630,650,520,.2],[650,780,520,.5],[610,700,530,.55]);
  [540,560,580,590].forEach(function(y){f1.push([610,720,y,.56],[85,200,y,.58],[740,800,y,.58]);});
  f1.push([740,860,570,.56],[760,880,600,.58]);
  heat('heat1',85,1490,.645,.715,.018,6,f1,true);

  var f2=[];
  [[85,100,116,.1],[130,140,116,.2],[160,240,116,.42],[210,215,106,.3],[95,240,136,.46],[95,240,156,.46]].forEach(function(f){f2.push(f);});
  [107,127,147,167,187].forEach(function(y){f2.push([640,665,y,.87]);f2.push([1018,1030,y,.25]);});
  [117,137,157].forEach(function(y){f2.push([1075,1095,y,.87]);});
  f2.push([75,120,258,.85],[130,160,258,.15],[180,290,258,.33]);
  for(x=310;x<760;x+=28)f2.push([x,x+12,258,.32]);
  f2.push([1080,1100,278,.2],[1155,1170,278,.2],[870,900,290,1],[1340,1365,298,.2],[1385,1410,298,.2],[80,90,298,.9],[1320,1350,318,.2],[1180,1220,328,1],[1400,1480,328,.85],[80,90,338,.1],[1340,1400,338,.2],[1270,1295,338,.3],[1215,1260,350,1],[1095,1150,358,.15],[1040,1060,368,.2],[945,1020,368,.9],[1100,1140,368,.95],[1150,1170,368,.25],[1230,1265,368,.95],[1200,1240,378,.2],[1095,1125,390,1],[1065,1080,390,.9]);
  for(x=80;x<150;x+=14){f2.push([x,x+6,380,.1]);f2.push([x+6,x+12,390,.95]);f2.push([x,x+7,468,.95]);f2.push([x+6,x+12,460,.1]);}
  f2.push([80,130,420,.2],[90,190,438,.2],[210,260,438,.2],[300,330,438,.9],[1250,1320,450,.95],[1335,1345,450,.2],[1255,1290,460,.15],[1095,1170,468,.97],[1175,1230,468,.3],[1110,1130,480,.3],[1220,1240,480,.9],[1250,1290,480,.2],[1295,1320,480,.9],[860,900,490,1],[935,965,490,.15],[1300,1360,490,.9],[145,165,500,.05],[175,195,500,.95],[235,330,500,.2],[340,385,500,.85],[265,310,510,1],[315,335,510,.1],[355,370,510,.1],[405,435,510,1],[530,550,510,.3],[615,630,520,.1],[640,655,520,1],[580,605,550,.88],[700,730,540,.3],[700,745,580,.35]);
  for(x=640;x<1400;x+=40)f2.push([x,x+20,430,.85]);
  f2.push([1160,1220,308,.85],[1400,1480,308,.85],[1320,1440,368,.85],[1380,1450,390,.85]);
  heat('heat2',75,1480,.575,.715,.11,2,f2,false);

  function setD(id,d){document.getElementById(id).setAttribute('d',d);}
  function imgTicks(pre,ax,x0){
    var mi='',ma='',y,i;
    for(i=-8;i<=66;i++){y=1242-i*17.24;if(y<247||y>1374)continue;if(i%10==0)ma+='M'+ax+' '+y+'h12';else mi+='M'+ax+' '+y+'h6';}
    for(i=-2;i<=54;i++){var x=x0+i*17.2;if(x<ax+2)continue;if(i%5==0)ma+='M'+x+' 1376v-12';else mi+='M'+x+' 1376v-6';}
    setD(pre+'-min',mi);setD(pre+'-maj',ma);
  }
  imgTicks('ia',790,832);imgTicks('ib',2084,2126);

  function cbTicks(pre,ax,y0,st,maj,lng,lm,lj,ll){
    var a='',b='',c='',k,y;
    for(k=-2;k<60;k++){y=y0+k*st;if(y<188||y>1470)continue;if(((k%lng)+lng)%lng==0)c+='M'+ax+' '+y+'h'+ll;else if(((k%maj)+maj)%maj==0)b+='M'+ax+' '+y+'h'+lj;else a+='M'+ax+' '+y+'h'+lm;}
    setD(pre+'-min',a);setD(pre+'-maj',b);setD(pre+'-lng',c);
  }
  cbTicks('c1',1832,360,29.12,5,10,13,16,23);
  cbTicks('c2',3145,293,28.12,5,10,13,15,21);

  function hist(id,right,prof,sp){
    var d='M'+right+' '+prof[0][0],y=prof[0][0],end=prof[prof.length-1][0],j=1;
    while(y<=end){
      while(j<prof.length-1&&y>prof[j][0])j++;
      var a=prof[j-1],b=prof[j],f=(y-a[0])/Math.max(1,b[0]-a[0]),w=a[1]+(b[1]-a[1])*Math.max(0,Math.min(1,f));
      var n=w>6?(1-sp/2+R()*sp):(.5+R());
      d+='L'+(right-w*n).toFixed(1)+' '+y;
      y+=2.5;
    }
    setD(id,d+'L'+right+' '+end+'Z');
  }
  hist('hist1',1915,[[373,1.5],[490,3],[510,9],[530,20],[545,28],[560,24],[575,34],[583,36],[585,62],[610,56],[634,50],[677,40],[723,24],[770,12],[810,5],[840,2],[1322,1.2]],.4);
  hist('hist2',3228,[[332,.8],[640,1.2],[690,3],[715,12],[735,22],[760,42],[784,62],[810,54],[835,44],[860,28],[890,15],[937,5],[980,2],[1363,1]],.3);

  function lineGrid(pre,ax,x0,stepX,yTop,yBot,yRef,stepY,xr){
    var a='',b='',i,x,y;
    for(i=-2;i<=60;i++){x=x0+i*stepX/5;if(x<=ax||x>xr)continue;if(i%5==0)b+='M'+x+' '+yTop+'V'+yBot;else a+='M'+x+' '+yTop+'V'+yBot;}
    for(i=-30;i<30;i++){y=yRef+i*stepY;if(y<yTop||y>yBot)continue;a+='M'+ax+' '+y+'H'+xr;}
    setD(pre+'-min',a);setD(pre+'-maj',b);
  }
  lineGrid('l1',802,845,84.6,1536,1821,1658,12.4,1735);
  lineGrid('l2',2100,2143,84.2,1536,1821,1682,8.45,3028);
})();
</script>
</body>
</html>
